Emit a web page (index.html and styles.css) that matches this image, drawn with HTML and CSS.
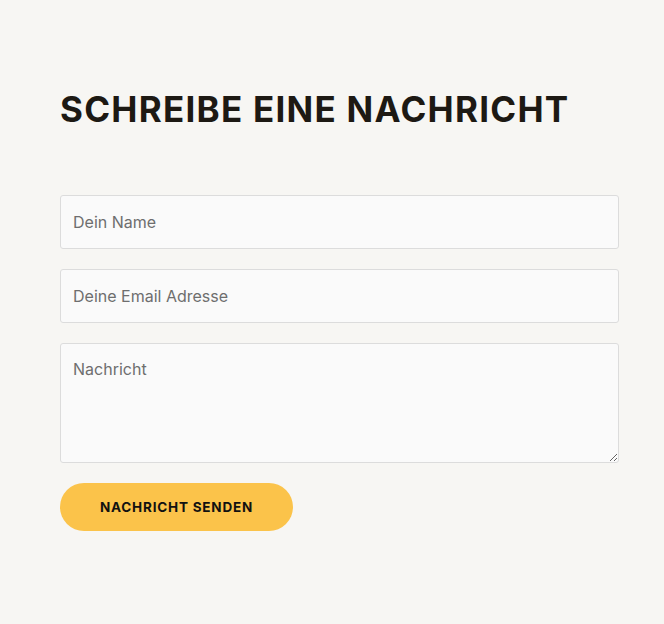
FILE: index.html
```html
<!DOCTYPE html>
<html lang="de">
<head>
  <meta charset="UTF-8">
  <meta name="viewport" content="width=device-width, initial-scale=1.0">
  <title>Kontakt</title>
  <link rel="stylesheet" href="styles.css">
</head>
<body>
  <section class="contact">
    <h2 class="contact-title">Schreibe eine Nachricht</h2>

    <form class="contact-form">
      <input type="text" placeholder="Dein Name">
      <input type="email" placeholder="Deine Email Adresse">
      <textarea placeholder="Nachricht"></textarea>
      <button type="submit">Nachricht senden</button>
    </form>
  </section>
</body>
</html>
```

FILE: styles.css
```css
body {
  margin: 0;
  background: #f7f6f3;
  font-family: Inter, 'Noto Sans', sans-serif;
  color: #1d1913;
}

.contact {
  padding: 88px 45px 60px 60px;
}

.contact-title {
  margin: 0 0 65px;
  font-size: 35px;
  line-height: 42px;
  font-weight: 700;
  text-transform: uppercase;
  letter-spacing: 1.25px;
  color: #1d1913;
}

.contact-form {
  display: flex;
  flex-direction: column;
  align-items: flex-start;
  gap: 20px;
}

.contact-form input,
.contact-form textarea {
  box-sizing: border-box;
  width: 559px;
  margin: 0;
  padding: 0 12px;
  background: #fafafa;
  border: 1px solid #dcdcdc;
  border-radius: 3px;
  font-family: inherit;
  font-size: 16px;
  color: #333;
}

.contact-form input {
  height: 54px;
}

.contact-form textarea {
  height: 120px;
  padding-top: 15px;
  resize: vertical;
}

.contact-form ::placeholder {
  color: #6e6e6e;
}

.contact-form button {
  width: 233px;
  height: 48px;
  border: none;
  border-radius: 24px;
  background: #fbc34a;
  font-family: inherit;
  font-size: 13.5px;
  font-weight: 700;
  letter-spacing: 0.8px;
  text-transform: uppercase;
  color: #111;
  cursor: pointer;
}
```
